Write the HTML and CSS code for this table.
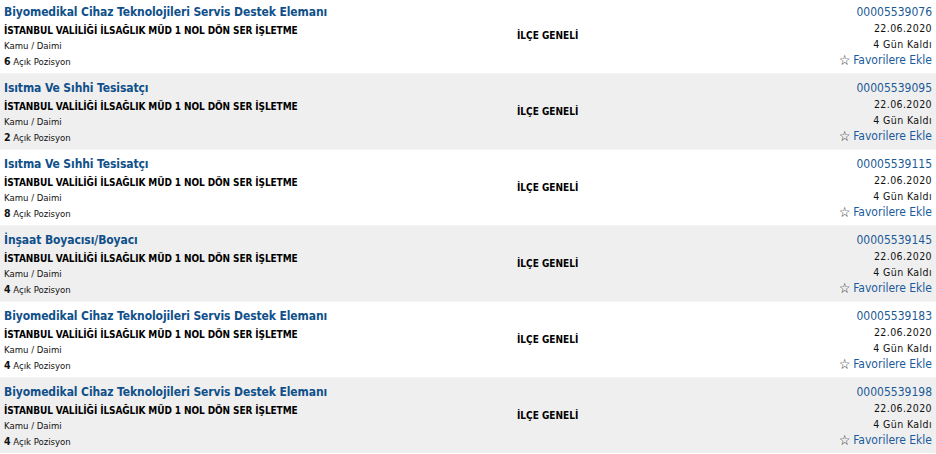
FILE: index.html
```html
<!DOCTYPE html>
<html lang="tr"><head><meta charset="utf-8"><title>İlanlar</title><link rel="stylesheet" href="styles.css"></head>
<body>
<div class="list">
  <div class="row">
    <div class="info">
      <a class="title" href="#">Biyomedikal Cihaz Teknolojileri Servis Destek Elemanı</a>
      <div class="org">İSTANBUL VALİLİĞİ İLSAĞLIK MÜD 1 NOL DÖN SER İŞLETME</div>
      <div class="type">Kamu / Daimi</div>
      <div class="pos"><b>6</b> Açık Pozisyon</div>
    </div>
    <div class="area">İLÇE GENELİ</div>
    <div class="meta">
      <a class="no" href="#">00005539076</a>
      <div class="date">22.06.2020</div>
      <div class="left">4 Gün Kaldı</div>
      <a class="fav" href="#"><span class="star">☆</span> Favorilere Ekle</a>
    </div>
  </div>
  <div class="row alt">
    <div class="info">
      <a class="title" href="#">Isıtma Ve Sıhhi Tesisatçı</a>
      <div class="org">İSTANBUL VALİLİĞİ İLSAĞLIK MÜD 1 NOL DÖN SER İŞLETME</div>
      <div class="type">Kamu / Daimi</div>
      <div class="pos"><b>2</b> Açık Pozisyon</div>
    </div>
    <div class="area">İLÇE GENELİ</div>
    <div class="meta">
      <a class="no" href="#">00005539095</a>
      <div class="date">22.06.2020</div>
      <div class="left">4 Gün Kaldı</div>
      <a class="fav" href="#"><span class="star">☆</span> Favorilere Ekle</a>
    </div>
  </div>
  <div class="row">
    <div class="info">
      <a class="title" href="#">Isıtma Ve Sıhhi Tesisatçı</a>
      <div class="org">İSTANBUL VALİLİĞİ İLSAĞLIK MÜD 1 NOL DÖN SER İŞLETME</div>
      <div class="type">Kamu / Daimi</div>
      <div class="pos"><b>8</b> Açık Pozisyon</div>
    </div>
    <div class="area">İLÇE GENELİ</div>
    <div class="meta">
      <a class="no" href="#">00005539115</a>
      <div class="date">22.06.2020</div>
      <div class="left">4 Gün Kaldı</div>
      <a class="fav" href="#"><span class="star">☆</span> Favorilere Ekle</a>
    </div>
  </div>
  <div class="row alt">
    <div class="info">
      <a class="title" href="#">İnşaat Boyacısı/Boyacı</a>
      <div class="org">İSTANBUL VALİLİĞİ İLSAĞLIK MÜD 1 NOL DÖN SER İŞLETME</div>
      <div class="type">Kamu / Daimi</div>
      <div class="pos"><b>4</b> Açık Pozisyon</div>
    </div>
    <div class="area">İLÇE GENELİ</div>
    <div class="meta">
      <a class="no" href="#">00005539145</a>
      <div class="date">22.06.2020</div>
      <div class="left">4 Gün Kaldı</div>
      <a class="fav" href="#"><span class="star">☆</span> Favorilere Ekle</a>
    </div>
  </div>
  <div class="row">
    <div class="info">
      <a class="title" href="#">Biyomedikal Cihaz Teknolojileri Servis Destek Elemanı</a>
      <div class="org">İSTANBUL VALİLİĞİ İLSAĞLIK MÜD 1 NOL DÖN SER İŞLETME</div>
      <div class="type">Kamu / Daimi</div>
      <div class="pos"><b>4</b> Açık Pozisyon</div>
    </div>
    <div class="area">İLÇE GENELİ</div>
    <div class="meta">
      <a class="no" href="#">00005539183</a>
      <div class="date">22.06.2020</div>
      <div class="left">4 Gün Kaldı</div>
      <a class="fav" href="#"><span class="star">☆</span> Favorilere Ekle</a>
    </div>
  </div>
  <div class="row alt">
    <div class="info">
      <a class="title" href="#">Biyomedikal Cihaz Teknolojileri Servis Destek Elemanı</a>
      <div class="org">İSTANBUL VALİLİĞİ İLSAĞLIK MÜD 1 NOL DÖN SER İŞLETME</div>
      <div class="type">Kamu / Daimi</div>
      <div class="pos"><b>4</b> Açık Pozisyon</div>
    </div>
    <div class="area">İLÇE GENELİ</div>
    <div class="meta">
      <a class="no" href="#">00005539198</a>
      <div class="date">22.06.2020</div>
      <div class="left">4 Gün Kaldı</div>
      <a class="fav" href="#"><span class="star">☆</span> Favorilere Ekle</a>
    </div>
  </div>
</div>
</body></html>
```
FILE: styles.css
```css
html,body{margin:0;padding:0;background:#fff}
body{font-family:"DejaVu Sans Condensed","DejaVu Sans",sans-serif;color:#000;overflow:hidden}
a{text-decoration:none}
.list{margin-top:-3px}
.row{display:grid;grid-template-columns:513px 1fr auto;align-items:center;height:76px;box-sizing:border-box;padding:0 4px;border-top:1px solid #f4f4f4;background:#fff}
.row.alt{background:#efefef}
.info{align-self:start;padding-top:5px;display:flex;flex-direction:column;align-items:flex-start}
.title{font-weight:bold;font-size:12px;line-height:18px;color:#10508a;letter-spacing:-0.1px}
.org{font-weight:bold;font-size:10px;line-height:18px;letter-spacing:-0.1px;margin-top:1px}
.type{font-size:9.5px;line-height:16px;color:#111;margin-top:-2px}
.pos{font-size:9.5px;line-height:16px;color:#111;margin-top:-1px}
.pos b{font-size:10.5px}
.area{font-weight:bold;font-size:10px}
.meta{align-self:start;padding-top:6px;display:flex;flex-direction:column;align-items:flex-end}
.no{font-size:12px;line-height:16px;color:#1c5a96}
.date,.left{font-size:10.5px;line-height:16px;color:#111;letter-spacing:0.4px}
.fav{font-size:12px;line-height:16px;color:#1a5b9a;display:flex;align-items:center}
.star{color:#222;font-size:14px;margin-right:3px}
```
